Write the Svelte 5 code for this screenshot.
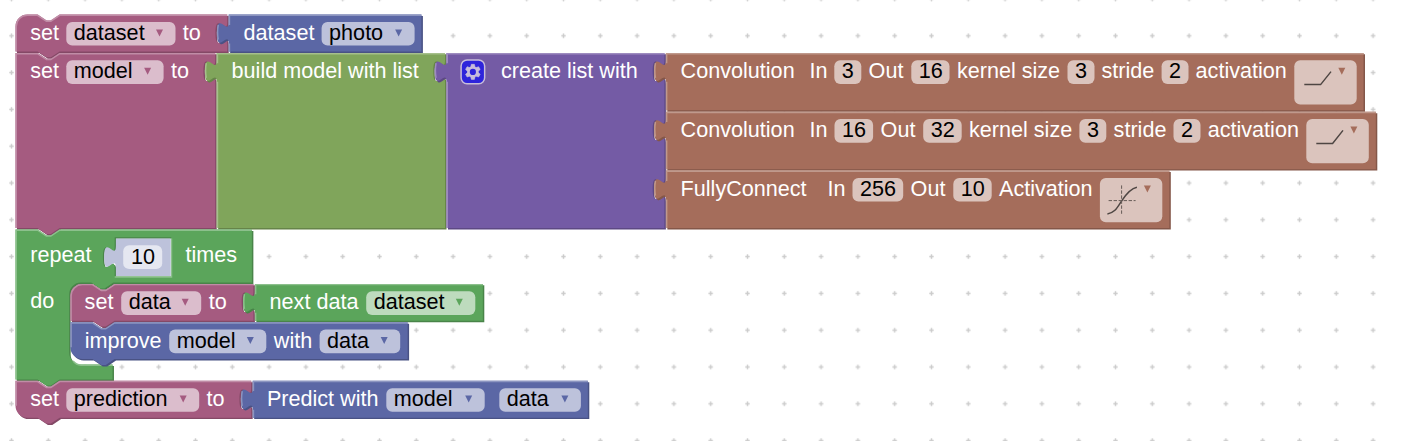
<script>
  // Workspace zoom: one block unit in pixels.
  const U = 1.472;
  const n = (v) => Math.round(v * 100) / 100;
  const rel = (cmd, pts) => cmd + pts.map((p) => n(p * U)).join(' ');

  const NOTCH = rel('l', [6, 4, 3, 0, 6, -4]);
  const NOTCH_BACK = rel('l', [-6, 4, -3, 0, -6, -4]);
  const TAB_DOWN = rel('c', [0, 10, -8, -8, -8, 7.5]) + rel('s', [8, -2.5, 8, 7.5]);
  const TAB_UP = rel('c', [0, -10, -8, 8, -8, -7.5]) + rel('s', [8, 2.5, 8, -7.5]);

  const R = n(8 * U);

  function outline(b) {
    const { x, y } = b;
    const right = b.right - U;
    const bottom = b.bottom - U;
    let d = b.roundTop ? `M${x} ${y + R}a${R} ${R} 0 0 1 ${R} ${-R}` : `M${x} ${y}`;
    if (b.stack) d += `H${n(x + 15 * U)}${NOTCH}`;
    d += `H${right}`;
    for (const iy of b.inputs ?? []) d += `V${n(iy + 5 * U)}${TAB_DOWN}`;
    d += `V${bottom}`;
    if (b.stack) d += `H${n(x + 30 * U)}${NOTCH_BACK}`;
    d += b.roundBottom ? `H${x + R}a${R} ${R} 0 0 1 ${-R} ${-R}` : `H${x}`;
    if (b.tab) d += `V${n(y + 20 * U)}${TAB_UP}`;
    return d + 'Z';
  }

  function highlight(b) {
    const h = U / 2;
    const x = b.x + h;
    const y = b.y + h;
    const bottom = b.bottom - U - (b.roundBottom ? R : 0);
    let d = `M${n(x)} ${n(bottom)}`;
    if (b.tab) {
      d += `V${n(b.y + 19.6 * U)}`;
      d += `M${n(b.x - 7.1 * U)} ${n(b.y + 17 * U)}` + rel('q', [-0.9, -5, 0, -10]);
      d += `M${n(x)} ${n(b.y + 7 * U)}`;
    }
    d += b.roundTop ? `V${n(b.y + R)}a${R - h} ${R - h} 0 0 1 ${R - h} ${-(R - h)}` : `V${n(y)}`;
    if (b.stack) d += `H${n(b.x + 15 * U)}${NOTCH}`;
    return d + `H${n(b.right - U)}`;
  }

  const palette = {
    pink: ['#a55b80', '#844966', '#c08ca6'],
    blue: ['#5b67a5', '#495284', '#8c95c0'],
    lime: ['#80a55b', '#668449', '#a6c08c'],
    violet: ['#745ba5', '#5d4984', '#9e8cc0'],
    brown: ['#a56d5b', '#845749', '#c0998c'],
    green: ['#5ba55b', '#498449', '#8cc08c']
  };

  const L = (x, text) => ({ x, text });
  const D = (x, end, text) => ({ x, end, text, kind: 'menu' });
  const N = (x, end, text) => ({ x, end, text, kind: 'number' });
  const P = (x, end, shape) => ({ x, end, kind: 'picture', shape });

  const loop = { x: 15.2, y: 229.1 };
  const loopPath =
    `M15.2 229.1H37.28${NOTCH}H251.6V282.1H${n(68.9 + 30 * U)}${NOTCH_BACK}H${n(68.9 + R)}` +
    `a${R} ${R} 0 0 0 ${-R} ${R}V${n(364.2 - R)}a${R} ${R} 0 0 0 ${R} ${R}H112.2V379.1` +
    `H${n(15.2 + 30 * U)}${NOTCH_BACK}H15.2Z` +
    `M114.4 236.9H171V276.1H114.4V${n(238.4 + 20 * U)}${TAB_UP}Z`;
  const loopLight =
    `M15.94 379.1V229.84H37.28${NOTCH}H251.6` +
    `M114.4 276.5H171.2V238` +
    `M${n(68.9 + 2.6 * U)} ${n(364.2 - 2.4 * U)}a${R} ${R} 0 0 0 ${n(5.4 * U)} ${n(2.9 * U)}H112.2`;

  const before = [
    { c: 'pink', x: 15.2, y: 14.2, right: 228.4, bottom: 52.5, stack: true, roundTop: true, inputs: [14.2],
      fields: [L(29.9, 'set'), D(66, 175.2, 'dataset'), L(182.4, 'to')] },
    { c: 'blue', x: 228.4, y: 14.2, right: 422.6, bottom: 52.5, tab: true,
      fields: [L(243.3, 'dataset'), D(321.3, 414.3, 'photo')] },
    { c: 'pink', x: 15.2, y: 52.5, right: 216.4, bottom: 229.1, stack: true, inputs: [52.5],
      fields: [L(29.9, 'set'), D(66, 163.3, 'model'), L(170.6, 'to')] },
    { c: 'lime', x: 216.4, y: 52.5, right: 446.2, bottom: 229.1, tab: true, inputs: [52.5],
      fields: [L(231.3, 'build model with list')] },
    { c: 'violet', x: 446.2, y: 52.5, right: 665.6, bottom: 229.1, tab: true, inputs: [52.5, 111.3, 170.2],
      gear: true, fields: [L(500.6, 'create list with')] },
    { c: 'brown', x: 665.6, y: 52.5, right: 1364.7, bottom: 111.3, tab: true,
      fields: [L(680.3, 'Convolution'), L(809.2, 'In'), N(834, 861, '3'), L(868.3, 'Out'), N(911, 949.2, '16'),
        L(956.6, 'kernel size'), N(1067.2, 1094.2, '3'), L(1101.2, 'stride'), N(1161.3, 1188.2, '2'),
        L(1195.3, 'activation'), P(1294, 1356.4, 'ramp')] },
    { c: 'brown', x: 665.6, y: 111.3, right: 1377, bottom: 170.2, tab: true,
      fields: [L(680.3, 'Convolution'), L(809.2, 'In'), N(834.2, 872.8, '16'), L(880.3, 'Out'), N(922.9, 961.4, '32'),
        L(968.7, 'kernel size'), N(1079.1, 1106, '3'), L(1113.3, 'stride'), N(1173.2, 1200.2, '2'),
        L(1207.4, 'activation'), P(1306, 1368.5, 'ramp')] },
    { c: 'brown', x: 665.6, y: 170.2, right: 1170.5, bottom: 229.1, tab: true,
      fields: [L(680.3, 'FullyConnect'), L(827.2, 'In'), N(852.2, 902.9, '256'), L(910.3, 'Out'), N(953, 991.4, '10'),
        L(998.7, 'Activation'), P(1099.6, 1162, 'curve')] }
  ];

  const after = [
    { c: 'pink', x: 70.1, y: 283.5, right: 254.6, bottom: 321.8, stack: true, roundTop: true, inputs: [283.5],
      fields: [L(84.3, 'set'), D(120.9, 200.9, 'data'), L(208.5, 'to')] },
    { c: 'green', x: 254.6, y: 283.5, right: 484, bottom: 321.8, tab: true,
      fields: [L(269.3, 'next data'), D(365.9, 475, 'dataset')] },
    { c: 'blue', x: 70.1, y: 321.8, right: 408.8, bottom: 360.1, stack: true, roundBottom: true,
      fields: [L(84.5, 'improve'), D(168.9, 266, 'model'), L(273.5, 'with'), D(319.3, 399.9, 'data')] },
    { c: 'pink', x: 15.2, y: 380.4, right: 252.4, bottom: 418.7, stack: true, roundBottom: true, inputs: [380.4],
      fields: [L(29.9, 'set'), D(66, 198.9, 'prediction'), L(206.1, 'to')] },
    { c: 'blue', x: 252.4, y: 380.4, right: 589, bottom: 418.7, tab: true,
      fields: [L(266.6, 'Predict with'), D(386, 484.4, 'model'), D(499, 580.6, 'data')] }
  ];

  const teeth = [0, 60, 120, 180, 240, 300];
</script>

{#snippet field(f, b)}
  {#if !f.kind}
    <text class="label" x={f.x} y={b.y + 25.4}>{f.text}</text>
  {:else}
    <rect class="box" x={f.x} y={b.y + 7.4} width={f.end - f.x} height={f.kind === 'picture' ? 44.2 : 23.6} rx="5.9" />
    {#if f.text}
      <text class="value" x={f.x + 7.5} y={b.y + 25.4}>{f.text}</text>
    {/if}
    {#if f.shape === 'ramp'}
      <path class="plot" d="M{f.x + 10} {b.y + 31.7}h16.3l10.4 -13" />
    {:else if f.shape === 'curve'}
      <path class="plot" d="M{f.x + 7.5} {b.y + 43.3}c7.6 -1.1 9.9 -6.4 14.3 -13.1s8.6 -12.3 15.2 -13.6" />
      <path class="axis" d="M{f.x + 8.7} {b.y + 30}h27M{f.x + 21.7} {b.y + 14.8}v29.5" />
    {/if}
    {#if f.kind !== 'number'}
      <path
        fill={palette[b.c][0]}
        d="M{f.end - (f.kind === 'menu' ? 19.5 : 18.4)} {b.y + 14.8}h7l-3.5 7z"
      />
    {/if}
  {/if}
{/snippet}

{#snippet block(b)}
  <g>
    <path d={outline(b)} fill={palette[b.c][1]} transform="translate({U} {U})" />
    <path d={outline(b)} fill={palette[b.c][0]} />
    <path class="light" d={highlight(b)} stroke={palette[b.c][2]} />
    {#if b.gear}
      <g opacity="0.6" transform="translate(460.8 59.7) scale({U})">
        <rect width="16" height="16" rx="4" fill="#00f" stroke="#fff" />
        <circle cx="8" cy="8" r="3.8" fill="#fff" />
        {#each teeth as angle}
          <path d="M6.5 4.9 6.95 2.9h2.1L9.5 4.9z" fill="#fff" stroke="#fff" stroke-width="0.4" transform="rotate({angle} 8 8)" />
        {/each}
        <circle cx="8" cy="8" r="2.1" fill="#00f" />
      </g>
    {/if}
    {#each b.fields as f}
      {@render field(f, b)}
    {/each}
  </g>
{/snippet}

<svg class="workspace" width="1403" height="441" viewBox="0 0 1403 441">
  <defs>
    <pattern id="grid" x="-6.9" y="17.4" width="36.8" height="36.8" patternUnits="userSpaceOnUse">
      <path d="M16.2 18.4h4.4M18.4 16.2v4.4" stroke="#ccc" stroke-width="1.47" />
    </pattern>
  </defs>
  <rect width="1403" height="441" fill="#fff" />
  <rect width="1390" height="441" fill="url(#grid)" />

  <g transform="translate(0.3 0.4)">
    {#each before as b}
      {@render block(b)}
    {/each}

    <g>
      <path d={loopPath} fill={palette.green[1]} fill-rule="evenodd" transform="translate({U} {U})" />
      <path d={loopPath} fill={palette.green[0]} fill-rule="evenodd" />
      <path class="light" d={loopLight} stroke={palette.green[2]} />
      <text class="label" x={loop.x + 14.7} y="261.4">repeat</text>
      <path fill="#bdc2db" d="M115.6 238.1H170.4V275.6H115.6V267.6{TAB_UP}Z" />
      <rect class="box" x="122.9" y="244.9" width="39" height="23.8" rx="5.9" />
      <text class="value" x="130.7" y="263.5">10</text>
      <text class="label" x="185.2" y="261.4">times</text>
      <text class="label" x={loop.x + 14.7} y="307.6">do</text>
    </g>

    {#each after as b}
      {@render block(b)}
    {/each}
  </g>
</svg>

<style>
  :global(body) {
    background: #fff;
    overflow: hidden;
  }

  .workspace {
    display: block;
    font-family: 'Liberation Sans', Arial, sans-serif;
    font-size: 21.6px;
  }

  .label {
    fill: #fff;
  }

  .value {
    fill: #000;
  }

  .box {
    fill: #fff;
    fill-opacity: 0.6;
  }

  .light {
    fill: none;
    stroke-width: 1.47;
  }

  .plot {
    fill: none;
    stroke: #4e4643;
    stroke-width: 1.5;
  }

  .axis {
    fill: none;
    stroke: #665b57;
    stroke-width: 1;
    stroke-dasharray: 3.4 1.6;
  }
</style>
